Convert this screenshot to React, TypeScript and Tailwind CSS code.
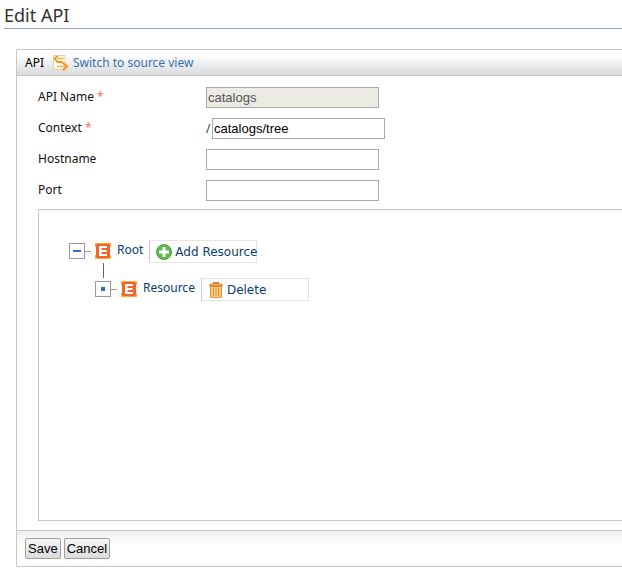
import React from "react";

const label = "font-['Noto_Sans','Lucida_Grande',sans-serif] text-[12px]";
const inputBase =
  "h-[21px] w-[173px] border border-[#a9a9a9] px-px font-['Liberation_Sans',Arial,sans-serif] text-[13px] outline-none";
const buttonBase =
  "h-[21px] rounded-xs border border-[#a0a0a0] bg-gradient-to-b from-[#f6f6f6] to-[#dcdcdc] px-0.5 font-['Liberation_Sans',Arial,sans-serif] text-[13px] leading-4 text-black";

function SwitchIcon() {
  return (
    <svg width="16" height="16" viewBox="0 0 16 16" aria-hidden="true">
      <path d="M.5 .5h11.500v14H.5z" fill="#fffaf0" stroke="#e3d3b0" />
      <path d="M11 3.500H4" stroke="#f9b25a" strokeWidth="1.500" />
      <path d="M4 11.500h9" stroke="#f9b25a" strokeWidth="1.500" />
      <path d="M5 1 1.500 3.500 4.500 7H9.500" fill="none" stroke="#f7941d" strokeWidth="1.800" />
      <path d="M9.500 7.500l4.500 4-4 3.500" fill="none" stroke="#f7941d" strokeWidth="2" />
    </svg>
  );
}

function ElementIcon() {
  return (
    <svg width="17" height="17" viewBox="0 0 17 17" aria-hidden="true" className="shrink-0">
      <path d="M0 0h16v4h-1v8h1v4H0v-4h1V4H0z" fill="#fbab30" />
      <path d="M1 2h1V1h12v1h1v12h-1v1H2v-1H1z" fill="#f4632e" />
      <path d="M4 3h8v2H6.500v2H11.500v2H6.500v2H12v2H4z" fill="#fff" />
    </svg>
  );
}

function AddIcon() {
  return (
    <svg width="16" height="16" viewBox="0 0 16 16" aria-hidden="true">
      <circle cx="8" cy="8" r="7.500" fill="#5cbb4c" stroke="#45a63a" />
      <path d="M6.500 3h3v3.500H13v3H9.500V13h-3V9.500H3v-3h3.500z" fill="#fff" />
    </svg>
  );
}

function TrashIcon() {
  return (
    <svg width="14" height="16" viewBox="0 0 14 16" aria-hidden="true">
      <path d="M4 0h6v2H4z" fill="#d98235" />
      <path d="M1 1.500h12l1 3H0z" fill="#dd8332" />
      <path d="M2 2.500h10" stroke="#f3b06a" />
      <path d="M1.500 4.500h11V15.500h-11z" fill="#f9cd7c" stroke="#df9240" />
      <path d="M4.500 6v8M7 6v8M9.500 6v8" stroke="#dc9440" />
    </svg>
  );
}

function Toggle({ open, name }: { open: boolean; name: string }) {
  return (
    <div className="flex shrink-0 items-center">
      <button type="button" aria-label={name} className="flex h-4 w-4 items-center justify-center border border-[#999] bg-white">
        <span className={open ? "h-0.5 w-2 bg-[#2f72b8]" : "h-1 w-1 bg-[#2f72b8]"} />
      </button>
      <span className="h-px w-1.5 bg-[#999]" />
    </div>
  );
}

function Node({ open, name, action, icon }: { open: boolean; name: string; action: string; icon: React.ReactNode }) {
  return (
    <div className="flex h-[23px] items-center pb-px text-[#0b3d70]">
      <Toggle open={open} name={"Toggle " + name} />
      <div className="ml-1 flex">
        <ElementIcon />
      </div>
      <a href="#" className={label + " ml-[5px] pb-0.5 leading-5"}>
        {name}
      </a>
      <a
        href="#"
        className="ml-1.5 flex h-[23px] w-[108px] items-center gap-[3px] self-start whitespace-nowrap border border-[#e5e5e5] border-l-[#ccc] pl-1.5 font-['DejaVu_Sans',Verdana,sans-serif] text-[12px] leading-5"
      >
        <span className="flex w-4 shrink-0 justify-center">{icon}</span>
        {action}
      </a>
    </div>
  );
}

function Field({ id, text, required, children }: { id: string; text: string; required?: boolean; children: React.ReactNode }) {
  return (
    <div className="flex h-[31px] items-start">
      <label htmlFor={id} className={label + " w-[168px] shrink-0 leading-5 text-[#111]"}>
        {text}
        {required && <span className="text-[#f5776b]"> *</span>}
      </label>
      <div className="flex items-center">{children}</div>
    </div>
  );
}

export default function App() {
  return (
    <main className="min-h-screen bg-white pl-1">
      <h1 className="h-[29px] border-b border-[#94a6cc] pt-0.5 font-['Noto_Sans','Lucida_Grande',sans-serif] text-[18px] leading-[26px] text-[#333]">
        Edit API
      </h1>
      <form className="ml-3 mt-5 border-y border-l border-[#c8c8c8]" onSubmit={(e) => e.preventDefault()}>
        <div className={label + " flex h-[26px] items-center border-b border-[#c8c8c8] bg-gradient-to-b from-white from-20% to-[#d8dadc] pl-2"}>
          <span className="leading-5 text-black">API</span>
          <a href="#" className="ml-[9px] flex items-center gap-1 leading-5 text-[#386fb0]">
            <SwitchIcon />
            Switch to source view
          </a>
        </div>
        <div className="pb-[9px] pl-[21px] pt-[11px]">
          <Field id="name" text="API Name" required>
            <input id="name" disabled defaultValue="catalogs" className={inputBase + " bg-[#ebebe4] text-[#545454]"} />
          </Field>
          <Field id="context" text="Context" required>
            <span className={label + " w-1.5 text-[#333]"}>/</span>
            <input id="context" defaultValue="catalogs/tree" className={inputBase + " bg-white text-black"} />
          </Field>
          <Field id="host" text="Hostname">
            <input id="host" className={inputBase + " bg-white text-black"} />
          </Field>
          <Field id="port" text="Port">
            <input id="port" className={inputBase + " bg-white text-black"} />
          </Field>
          <div className="-mt-0.5 h-[312px] border-y border-l border-[#c8c8c8] pl-[30px] pt-[30px]">
            <Node open name="Root" action="Add Resource" icon={<AddIcon />} />
            <div className="ml-[34px] h-[15px] w-px bg-[#666]" />
            <div className="pl-[26px]">
              <Node open={false} name="Resource" action="Delete" icon={<TrashIcon />} />
            </div>
          </div>
        </div>
        <div className="flex h-9 items-center gap-[3px] border-t border-[#c8c8c8] bg-gradient-to-b from-[#eee] to-white to-40% pl-2">
          <button type="submit" className={buttonBase}>
            Save
          </button>
          <button type="button" className={buttonBase}>
            Cancel
          </button>
        </div>
      </form>
    </main>
  );
}
